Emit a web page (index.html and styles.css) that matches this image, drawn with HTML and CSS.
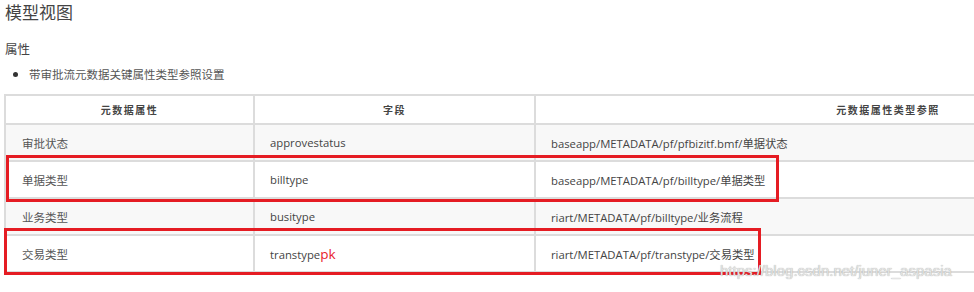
FILE: index.html
```html
<!DOCTYPE html>
<html lang="zh">
<head>
<meta charset="utf-8">
<link rel="stylesheet" href="styles.css">
</head>
<body>
<div class="page">
  <h2 class="title">模型视图</h2>
  <h4 class="subtitle">属性</h4>
  <ul class="list">
    <li>带审批流元数据关键属性类型参照设置</li>
  </ul>
  <div class="table-wrap">
    <table class="meta">
      <colgroup>
        <col class="c1"><col class="c2"><col class="c3">
      </colgroup>
      <thead>
        <tr><th>元数据属性</th><th>字段</th><th>元数据属性类型参照</th></tr>
      </thead>
      <tbody>
        <tr class="odd"><td>审批状态</td><td>approvestatus</td><td>baseapp/METADATA/pf/pfbizitf.bmf/单据状态</td></tr>
        <tr><td>单据类型</td><td>billtype</td><td>baseapp/METADATA/pf/billtype/单据类型</td></tr>
        <tr class="odd"><td>业务类型</td><td>busitype</td><td>riart/METADATA/pf/billtype/业务流程</td></tr>
        <tr><td>交易类型</td><td>transtype<span class="pk">pk</span></td><td>riart/METADATA/pf/transtype/交易类型</td></tr>
      </tbody>
    </table>
    <div class="mark mark-1"></div>
    <div class="mark mark-2"></div>
    <div class="watermark">https://blog.csdn.net/juner_aspasia</div>
  </div>
</div>
</body>
</html>
```

FILE: styles.css
```css
html, body {
  margin: 0;
  padding: 0;
  background: #fff;
  overflow: hidden;
}
.page {
  width: 974px;
  height: 292px;
  overflow: hidden;
  font-family: "Open Sans", "Noto Sans CJK SC", sans-serif;
  color: #555;
}
.title {
  margin: 0;
  padding: 1px 0 0 5px;
  font-family: "Noto Sans CJK SC", sans-serif;
  font-weight: 400;
  font-size: 17px;
  line-height: 21px;
  color: #444;
}
.subtitle {
  margin: 19px 0 0 0;
  padding-left: 5px;
  font-family: "Noto Sans CJK SC", sans-serif;
  font-weight: 400;
  font-size: 12.5px;
  line-height: 15px;
  color: #444;
}
.list {
  margin: 10px 0 0 0;
  padding: 0 0 0 29px;
  font-family: "Noto Sans CJK SC", sans-serif;
  font-size: 11.5px;
  line-height: 16px;
  color: #555;
}
.list li::marker {
  font-size: 12px;
  color: #333;
}
.table-wrap {
  position: relative;
  margin-top: 12px;
  height: 200px;
}
.meta {
  margin-left: 4px;
  width: 1238px;
  border-collapse: collapse;
  table-layout: fixed;
  font-size: 11.5px;
  color: #555;
}
.c1 { width: 249px; }
.c2 { width: 281px; }
.meta th, .meta td {
  border: 2px solid #dcdcdc;
}
.meta th {
  height: 27px;
  padding: 0;
  font-family: "Noto Sans CJK SC", sans-serif;
  font-size: 10px;
  font-weight: 700;
  letter-spacing: 1.5px;
  color: #444;
  text-align: center;
}
.meta td {
  height: 35px;
  padding: 0 0 0 15px;
  font-family: "Open Sans", "Noto Sans CJK SC", sans-serif;
  font-size: 11.3px;
  color: #444;
  text-align: left;
  white-space: nowrap;
}
.meta td:first-child {
  padding-left: 16px;
  font-family: "Noto Sans CJK SC", sans-serif;
  font-size: 11.5px;
  color: #555;
}
.meta tr.odd td {
  background: #f8f8f8;
}
.pk {
  color: #e8202a;
  font-size: 13.5px;
}
.mark {
  position: absolute;
  border: 3px solid #e51c23;
  box-sizing: border-box;
}
.mark-1 {
  left: 6px;
  top: 61px;
  width: 773px;
  height: 47px;
}
.mark-2 {
  left: 4px;
  top: 134px;
  width: 757px;
  height: 47px;
}
.watermark {
  position: absolute;
  left: 720px;
  top: 168px;
  font-family: "Liberation Sans", Arial, sans-serif;
  font-size: 15px;
  line-height: 18px;
  color: #e4e4e4;
  text-shadow: 0 0 1px #9a9a9a;
  white-space: nowrap;
}
```
